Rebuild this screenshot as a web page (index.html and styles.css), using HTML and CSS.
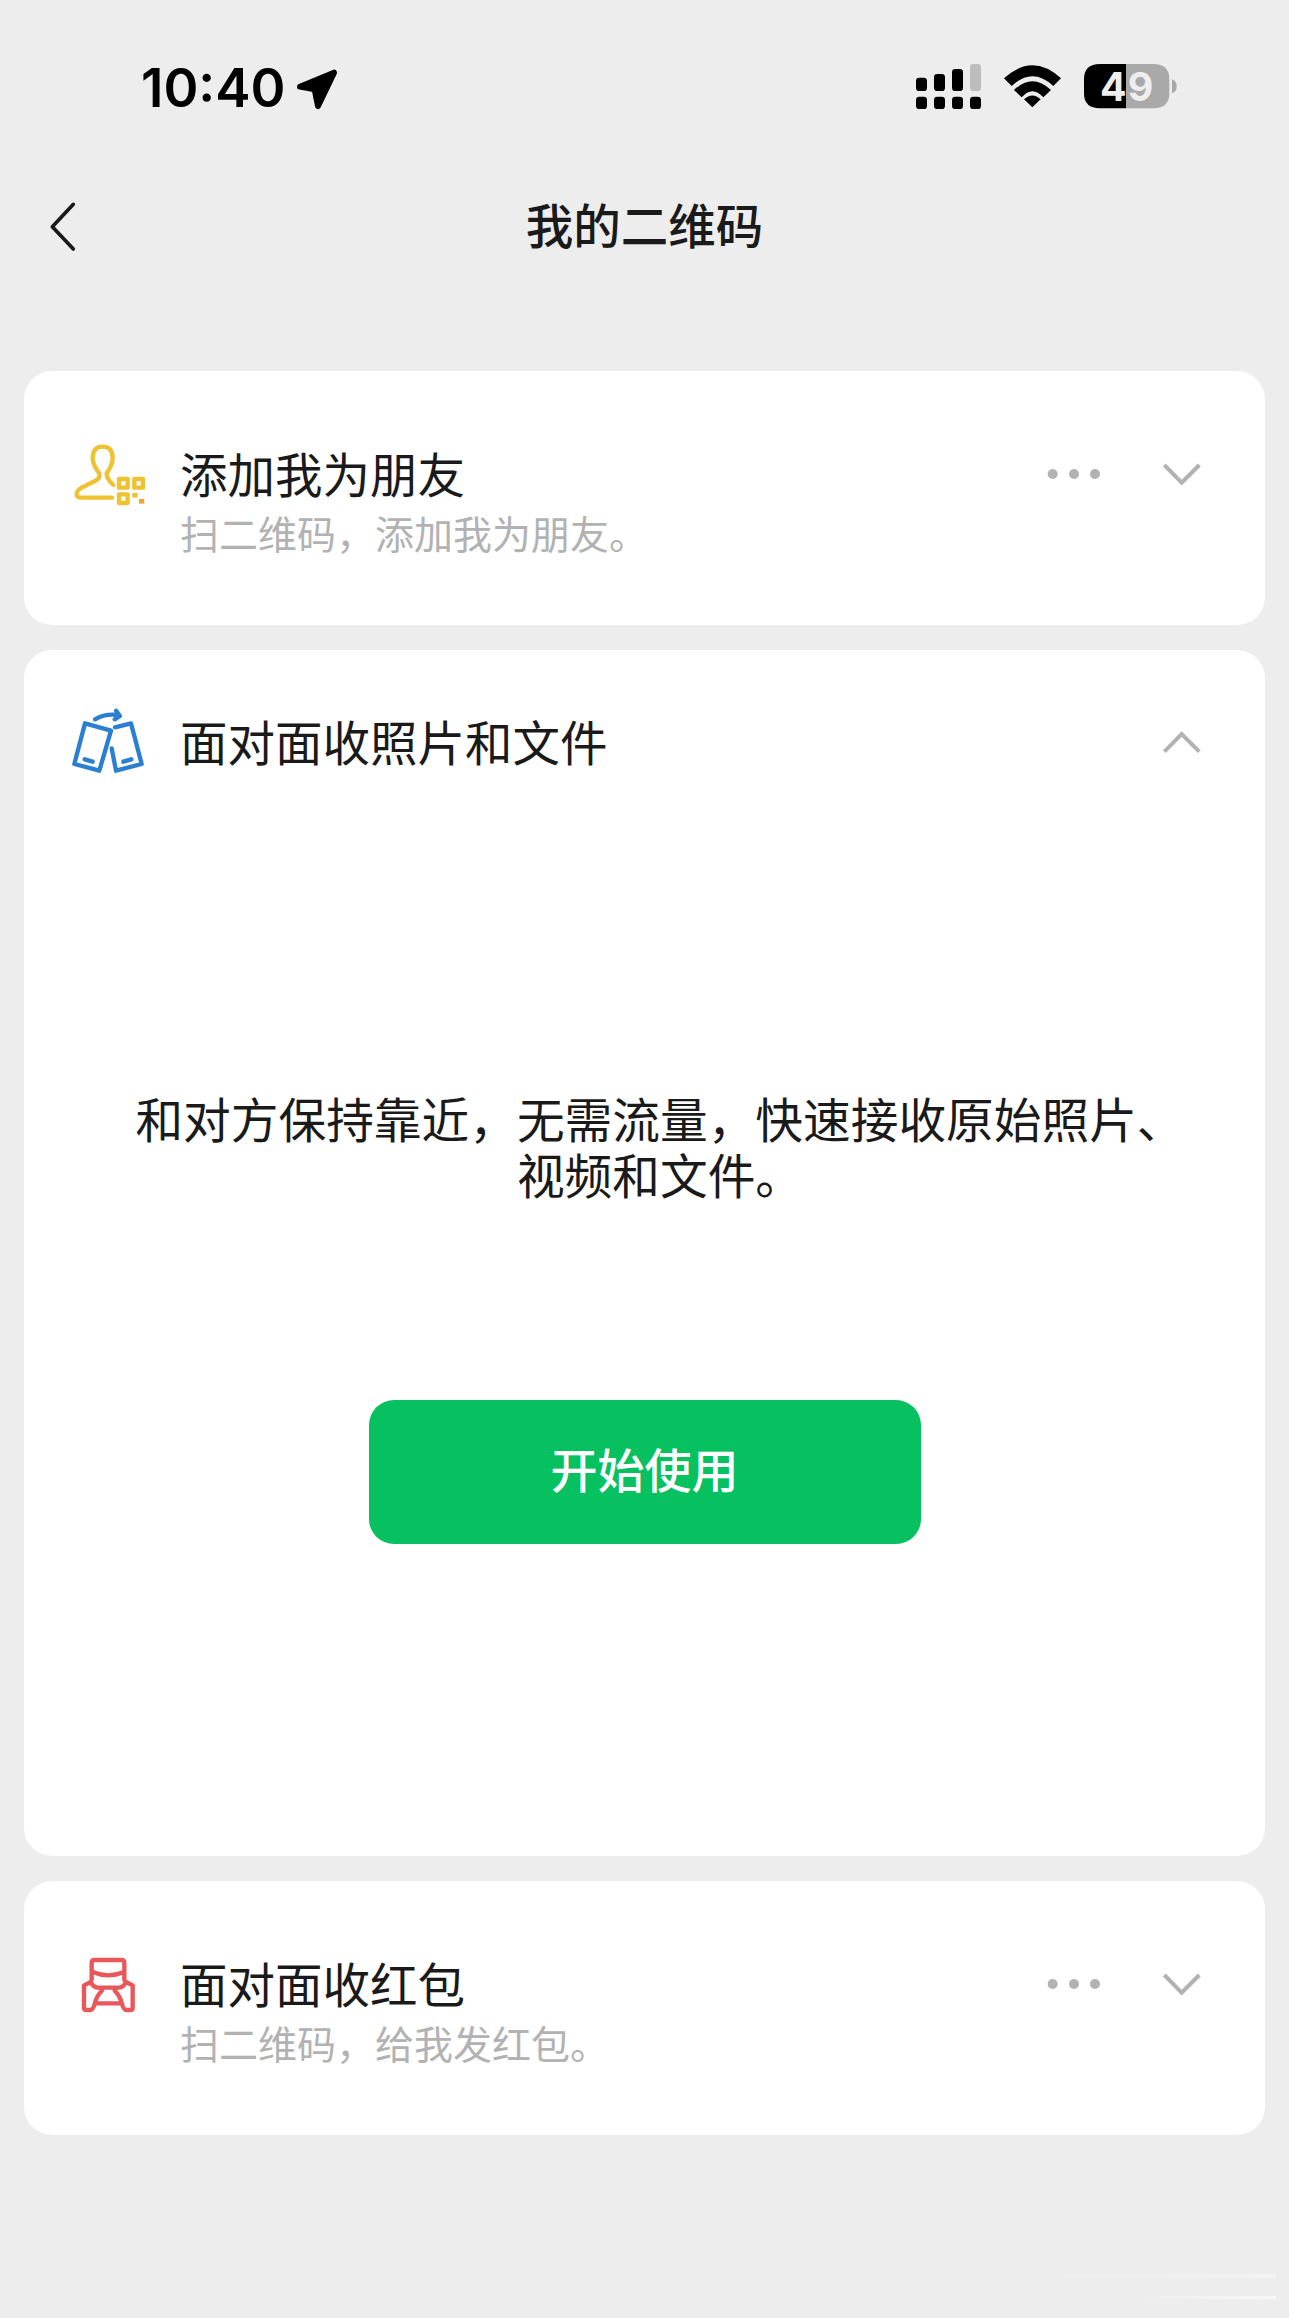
FILE: index.html
```html
<!DOCTYPE html>
<html lang="zh-CN">
<head>
    <meta charset="UTF-8">
    <meta name="viewport" content="width=device-width, initial-scale=1.0">
    <title>我的二维码</title>
    <link rel="stylesheet" href="styles.css">
</head>
<body>
    <div class="status">
        <div class="status_left">
            <span class="time">10:40</span>
            <svg class="arrow" viewBox="0 0 150 150">
                <path d="M18 62 L120 20 L72 120 L62 70 Z" fill="#000" stroke="#000" stroke-width="18" stroke-linejoin="round"/>
            </svg>
        </div>
        <svg class="status_right" viewBox="0 0 960 270">
            <g fill="#000">
                <rect x="108" y="170" width="33" height="37" rx="10"/>
                <rect x="162" y="170" width="33" height="37" rx="10"/>
                <rect x="216" y="170" width="33" height="37" rx="10"/>
                <rect x="270" y="170" width="33" height="37" rx="10"/>
                <rect x="108" y="113" width="33" height="40" rx="10"/>
                <rect x="162" y="102" width="33" height="51" rx="10"/>
                <rect x="216" y="87" width="33" height="66" rx="10"/>
            </g>
            <rect x="270" y="72" width="33" height="81" rx="10" fill="#bdbdbd"/>
            <g fill="#000">
                <path d="M372 115 Q457 37 543 115 L520 138 Q457 80 395 138 Z"/>
                <path d="M402 150 Q457 97 513 150 L490 172 Q457 136 425 172 Z"/>
                <path d="M432 178 Q457 155 482 178 L457 202 Z"/>
            </g>
            <path d="M738 72 H820 Q868 72 868 118 V160 Q868 205 820 205 H738 Z" fill="#a9a9a9"/>
            <path d="M738 72 H660 Q612 72 612 118 V160 Q612 205 660 205 H738 Z" fill="#000"/>
            <path d="M876 118 Q890 122 890 139 Q890 156 876 160 Z" fill="#a9a9a9"/>
            <text class="batt" x="660" y="183" fill="#eee">4</text>
            <text class="batt" x="743" y="183" fill="#eee">9</text>
        </svg>
    </div>

    <div class="nav">
        <svg class="back" viewBox="0 0 360 300">
            <path d="M220 103 L157 170 L220 237" fill="none" stroke="#1a1a1a" stroke-width="11" stroke-linecap="round" stroke-linejoin="round"/>
        </svg>
        <h1 class="nav_title">我的二维码</h1>
    </div>

    <div class="cards">
        <div class="card card_row">
            <svg class="icon" viewBox="0 0 390 330">
                <g fill="none" stroke="#f0c232" stroke-width="13" stroke-linejoin="round" stroke-linecap="round">
                    <path d="M216 233 H125 Q108 233 110 220 Q112 208 135 198 L165 183 Q182 175 178 160 Q158 135 158 115 Q158 80 188 80 Q218 80 218 115 Q218 135 200 160 Q198 175 220 195"/>
                    <rect x="237" y="177" width="26" height="26"/>
                    <rect x="283" y="177" width="26" height="26"/>
                    <rect x="237" y="223" width="26" height="26"/>
                </g>
                <rect x="277" y="219" width="16" height="14" fill="#f0c232"/>
                <rect x="297" y="237" width="16" height="14" fill="#f0a832"/>
            </svg>
            <div class="text">
                <div class="card_title">添加我为朋友</div>
                <div class="card_sub">扫二维码，添加我为朋友。</div>
            </div>
            <svg class="more" viewBox="0 0 660 270">
                <g fill="#b2b2b2">
                    <circle cx="98" cy="102" r="15"/>
                    <circle cx="162" cy="102" r="15"/>
                    <circle cx="225" cy="102" r="15"/>
                </g>
                <path d="M433 75 L485 128 L538 75" fill="none" stroke="#b2b2b2" stroke-width="12"/>
            </svg>
        </div>

        <div class="card card_open">
            <div class="open_head">
                <svg class="icon" viewBox="0 0 390 330">
                    <g fill="none" stroke="#2b7fd0" stroke-width="13" stroke-linejoin="round" stroke-linecap="round">
                        <path d="M135 100 L213 122 L178 242 L103 222 Z"/>
                        <path d="M225 112 L273 100 L305 222 L228 242 L215 175"/>
                        <path d="M165 88 Q195 70 235 75"/>
                        <path d="M228 62 L240 78 L224 88"/>
                        <path d="M134 208 L158 215"/>
                        <path d="M250 215 L274 208"/>
                    </g>
                </svg>
                <div class="card_title">面对面收照片和文件</div>
                <svg class="more" viewBox="0 0 660 270">
                    <path d="M433 128 L485 75 L538 128" fill="none" stroke="#b2b2b2" stroke-width="12"/>
                </svg>
            </div>
            <p class="open_desc">和对方保持靠近，无需流量，快速接收原始照片、<br>视频和文件。</p>
            <button class="start_btn">开始使用</button>
        </div>

        <div class="card card_row">
            <svg class="icon" viewBox="-30 -18 390 330">
                <g fill="none" stroke="#e8575a" stroke-width="13" stroke-linejoin="round" stroke-linecap="round">
                    <path d="M125 132 V80 Q125 72 133 72 H215 Q223 72 223 80 V132"/>
                    <path d="M128 108 Q175 128 222 108"/>
                    <path d="M122 138 L102 148 V215 Q102 222 110 222 H122 Q130 220 135 200 Q140 180 155 165 Q160 155 145 155 Q130 155 122 138"/>
                    <path d="M228 138 L248 148 V215 Q248 222 240 222 H228 Q220 220 215 200 Q210 180 195 165 Q190 155 205 155 Q220 155 228 138"/>
                    <path d="M137 202 H213"/>
                    <path d="M155 155 H195"/>
                </g>
            </svg>
            <div class="text">
                <div class="card_title">面对面收红包</div>
                <div class="card_sub">扫二维码，给我发红包。</div>
            </div>
            <svg class="more" viewBox="0 0 660 270">
                <g fill="#b2b2b2">
                    <circle cx="98" cy="102" r="15"/>
                    <circle cx="162" cy="102" r="15"/>
                    <circle cx="225" cy="102" r="15"/>
                </g>
                <path d="M433 75 L485 128 L538 75" fill="none" stroke="#b2b2b2" stroke-width="12"/>
            </svg>
        </div>
    </div>

    <div class="watermark"></div>
</body>
</html>
```

FILE: styles.css
```css
* {
    box-sizing: border-box;
}
body {
    margin: 0;
    height: 2318px;
    position: relative;
    overflow: hidden;
    background: #ededed;
    color: #1a1a1a;
    font-family: "Noto Sans CJK SC", "Liberation Sans", sans-serif;
}
.status {
    display: flex;
    justify-content: space-between;
    align-items: center;
    padding: 40px 89px 0 141px;
    height: 130px;
}
.status_left {
    display: flex;
    align-items: center;
    margin-top: 6px;
    color: #000;
}
.time {
    font-family: Inter, "Liberation Sans", sans-serif;
    font-size: 53px;
    font-weight: 600;
    line-height: 60px;
}
.arrow {
    width: 50px;
    height: 50px;
    margin-left: 8px;
    margin-top: 6px;
}
.status_right {
    width: 320px;
    height: 90px;
}
.batt {
    font-family: Inter, "Liberation Sans", sans-serif;
    font-size: 118px;
    font-weight: 700;
}
.nav {
    display: flex;
    align-items: flex-start;
    height: 100px;
    margin-top: 40px;
}
.back {
    width: 120px;
    height: 100px;
    flex: none;
}
.nav_title {
    flex: 1;
    margin: 24px 120px 0 0;
    text-align: center;
    font-size: 47.5px;
    font-weight: 500;
    line-height: 60px;
}
.cards {
    display: flex;
    flex-direction: column;
    margin: 101px 24px 0;
    gap: 25px;
}
.card {
    background: #fff;
    border-radius: 28px;
}
.card_row {
    display: flex;
    align-items: flex-start;
    height: 254px;
    padding: 49px 25px 0 16px;
}
.icon {
    width: 130px;
    height: 110px;
    flex: none;
    margin-right: 10px;
}
.text {
    flex: 1;
    padding-top: 23px;
}
.card_title {
    flex: 1;
    font-size: 47.5px;
    line-height: 60px;
}
.card_sub {
    margin-top: -1px;
    font-size: 39px;
    line-height: 60px;
    color: #b2b2b2;
}
.more {
    width: 220px;
    height: 90px;
    flex: none;
    margin-top: 20px;
}
.card_open {
    height: 1206px;
    padding-top: 40px;
    text-align: center;
}
.open_head {
    display: flex;
    align-items: flex-start;
    padding: 0 25px 0 16px;
    text-align: left;
}
.open_head .card_title {
    padding-top: 21px;
}
.open_head .more {
    margin-top: 19px;
}
.open_desc {
    margin: 290px 0 0;
    padding-left: 31px;
    font-size: 47.7px;
    line-height: 56px;
}
.start_btn {
    display: block;
    width: 552px;
    height: 144px;
    margin: 198px auto 0;
    padding: 0 0 10px;
    border: 0;
    border-radius: 25px;
    background: #07c160;
    color: #fff;
    font-family: inherit;
    font-size: 47px;
    font-weight: 500;
}
.watermark {
    position: absolute;
    right: 13px;
    top: 2274px;
    width: 240px;
    height: 25px;
    background:
        linear-gradient(to right, rgba(255,255,255,0), rgba(255,255,255,0.35)) top / 100% 4px no-repeat,
        linear-gradient(to right, rgba(255,255,255,0), rgba(255,255,255,0.6)) bottom right / 60% 3px no-repeat;
}
```
